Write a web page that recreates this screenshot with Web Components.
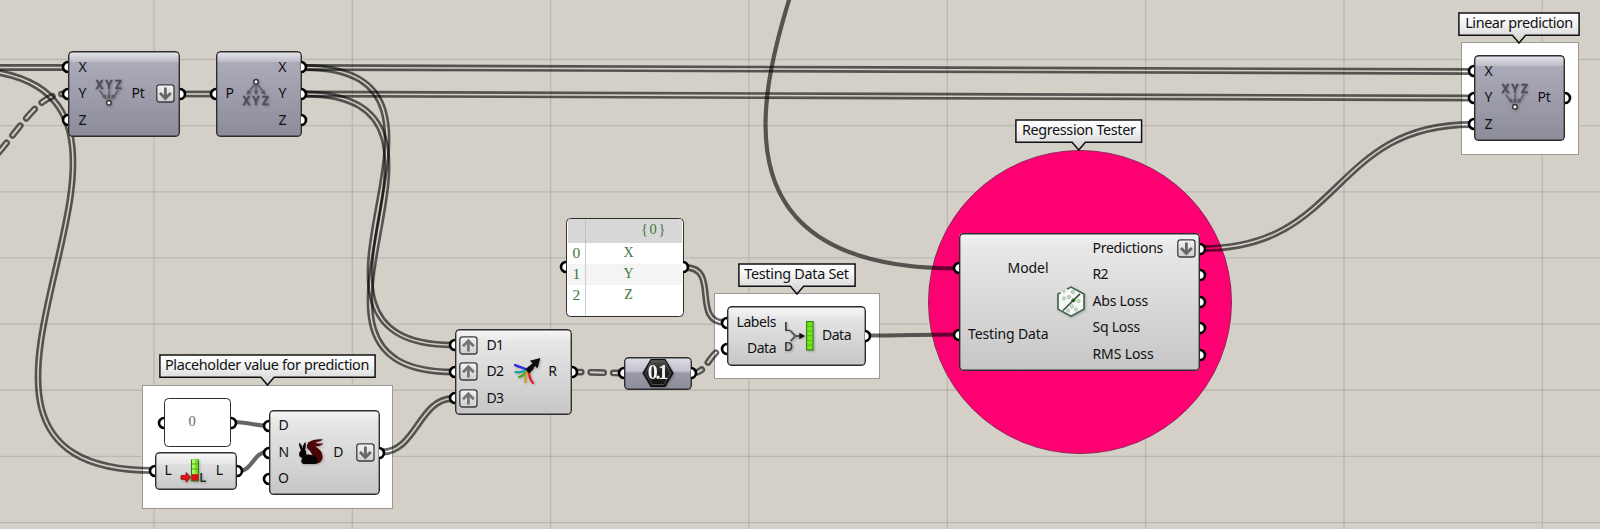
<!DOCTYPE html>
<html lang="en">
<head>
<meta charset="utf-8">
<title>Node canvas</title>
<style>
  html, body { margin: 0; padding: 0; overflow: hidden; }
  body { font-family: "Noto Sans", "Open Sans", sans-serif; font-size: 14px; color: #111; background: #d4d0c8; }
</style>
</head>
<body>
<gh-canvas>
  <gh-group style="left:142px;top:384.5px;width:248.5px;height:122.5px"></gh-group>
  <gh-group style="left:714px;top:293px;width:163.5px;height:84px"></gh-group>
  <gh-group style="left:1461px;top:42px;width:115.5px;height:110.5px"></gh-group>
  <gh-group round style="left:927.5px;top:149.5px"></gh-group>
  <gh-wires></gh-wires>

  <gh-node tone="dark" style="left:68px;top:51px;width:112px;height:85.5px">
    <gh-col style="width:28px"><gh-port side="in">X</gh-port><gh-port side="in">Y</gh-port><gh-port side="in">Z</gh-port></gh-col>
    <gh-icon name="compose"></gh-icon>
    <gh-col style="flex:1"><gh-port side="out" pad="5" gap="11.5" mode="down" fit="13">Pt</gh-port></gh-col>
  </gh-node>

  <gh-node tone="dark" style="left:216px;top:51px;width:85.5px;height:85.5px">
    <gh-col style="width:23px"><gh-port side="in" pad="9.5">P</gh-port></gh-col>
    <gh-icon name="decompose"></gh-icon>
    <gh-col style="flex:1"><gh-port side="out" pad="15">X</gh-port><gh-port side="out" pad="15">Y</gh-port><gh-port side="out" pad="15">Z</gh-port></gh-col>
  </gh-node>

  <gh-panel style="left:164px;top:398px;width:67px;height:49px" plain>0</gh-panel>

  <gh-node style="left:155px;top:452px;width:82px;height:38px">
    <gh-col style="width:22px"><gh-port side="in" pad="9.5">L</gh-port></gh-col>
    <gh-icon name="length"></gh-icon>
    <gh-col style="flex:1"><gh-port side="out" pad="14">L</gh-port></gh-col>
  </gh-node>

  <gh-node style="left:269px;top:410px;width:110.5px;height:85px">
    <gh-col style="width:28px"><gh-port side="in" pad="9.5">D</gh-port><gh-port side="in" pad="9.5">N</gh-port><gh-port side="in" pad="9">O</gh-port></gh-col>
    <gh-icon name="rabbit"></gh-icon>
    <gh-col style="flex:1"><gh-port side="out" pad="5" gap="12" mode="down">D</gh-port></gh-col>
  </gh-node>

  <gh-node style="left:455px;top:329px;width:117px;height:85.5px">
    <gh-col style="width:56px"><gh-port side="in" pad="3.5" gap="9" mode="up" fit="17">D1</gh-port><gh-port side="in" pad="3.5" gap="9" mode="up" fit="17">D2</gh-port><gh-port side="in" pad="3.5" gap="9" mode="up" fit="17">D3</gh-port></gh-col>
    <gh-icon name="weave"></gh-icon>
    <gh-col style="flex:1"><gh-port side="out" pad="15">R</gh-port></gh-col>
  </gh-node>

  <gh-panel style="left:566px;top:218px;width:117.5px;height:98.5px" path="{0}" rows="X,Y,Z"></gh-panel>

  <gh-node tone="dark" small style="left:624px;top:357px;width:67.5px;height:32.5px">
    <gh-col style="width:18px"><gh-port side="in"></gh-port></gh-col>
    <gh-icon name="number"></gh-icon>
    <gh-col style="flex:1"><gh-port side="out"></gh-port></gh-col>
  </gh-node>

  <gh-node style="left:727px;top:306px;width:138.5px;height:59.5px">
    <gh-col style="width:49px"><gh-port side="in" end fit="39.5">Labels</gh-port><gh-port side="in" end fit="29">Data</gh-port></gh-col>
    <gh-icon name="dataset"></gh-icon>
    <gh-col style="flex:1"><gh-port side="out" pad="14.5" fit="29">Data</gh-port></gh-col>
  </gh-node>

  <gh-node style="left:959px;top:232.5px;width:241px;height:138px">
    <gh-col tall style="width:89.5px"><gh-port side="in" end fit="41">Model</gh-port><gh-port side="in" end fit="80.5">Testing Data</gh-port></gh-col>
    <gh-icon name="regression"></gh-icon>
    <gh-col style="flex:1"><gh-port side="out" start mode="down" pad="4.5" fit="70.5">Predictions</gh-port><gh-port side="out" start fit="15.5">R2</gh-port><gh-port side="out" start fit="55.5">Abs Loss</gh-port><gh-port side="out" start fit="47.5">Sq Loss</gh-port><gh-port side="out" start fit="61">RMS Loss</gh-port></gh-col>
  </gh-node>

  <gh-node tone="dark" style="left:1474px;top:55px;width:91px;height:85.5px">
    <gh-col style="width:28px"><gh-port side="in">X</gh-port><gh-port side="in">Y</gh-port><gh-port side="in">Z</gh-port></gh-col>
    <gh-icon name="compose"></gh-icon>
    <gh-col style="flex:1"><gh-port side="out" pad="14.5" fit="13">Pt</gh-port></gh-col>
  </gh-node>

  <gh-label fit="204" style="left:158.5px;top:354px;width:217px">Placeholder value for prediction</gh-label>
  <gh-label fit="104.5" style="left:737.5px;top:262.5px;width:118px">Testing Data Set</gh-label>
  <gh-label fit="113.5" style="left:1015px;top:118.5px;width:127.5px">Regression Tester</gh-label>
  <gh-label fit="107.5" style="left:1458px;top:11.5px;width:122px">Linear prediction</gh-label>
</gh-canvas>

<script>
const mount = (el, html) => {
  if (!el.shadowRoot) el.attachShadow({ mode: 'open' });
  el.shadowRoot.innerHTML = html;
  return el.shadowRoot;
};

const fitText = (span, text, width) => {
  if (!width || text.length < 2) return;
  const natural = span.getBoundingClientRect().width;
  const step = (width - natural) / text.length;
  span.style.letterSpacing = step.toFixed(3) + 'px';
};

const half = side => side === 'in'
  ? '<svg class="knob" width="7" height="14" viewBox="0 0 7 14"><circle cx="7" cy="7" r="5" fill="#fff" stroke="#000" stroke-width="2.6"/></svg>'
  : '<svg class="knob" width="7" height="14" viewBox="0 0 7 14"><circle cx="0" cy="7" r="5" fill="#fff" stroke="#000" stroke-width="2.6"/></svg>';

customElements.define('gh-canvas', class extends HTMLElement {
  connectedCallback() {
    let lines = '';
    for (let i = 0; i < 8; i++) {
      const x = 154 + i * 198.33, y = 59.5 + i * 66.15;
      lines += `<path d="M${x} 0V529M0 ${y}H1600"/>`;
    }
    mount(this, `<style>
      :host { display: block; position: relative; width: 1600px; height: 529px; overflow: hidden; background: #d4d0c8; }
      svg { position: absolute; inset: 0; }
    </style><svg width="1600" height="529" stroke="#000" stroke-opacity=".115" stroke-width="1.3">${lines}</svg><slot></slot>`);
  }
});

customElements.define('gh-group', class extends HTMLElement {
  connectedCallback() {
    mount(this, `<style>
      :host { display: block; position: absolute; box-sizing: content-box; background: #fff; border: 1px solid #9b9893; }
      :host([round]) { background: #ff0073; border: 1px solid #8d2a55; border-radius: 50%; box-sizing: border-box; width: 304.5px; height: 304.5px; }
    </style>`);
  }
});

customElements.define('gh-wires', class extends HTMLElement {
  connectedCallback() {
    const link = (x1, y1, x2, y2, d) => `M${x1} ${y1}C${x1 + d} ${y1} ${x2 - d} ${y2} ${x2} ${y2}`;
    const wires = [
      ['double', 'M-20 67.5H64'],
      ['double', link(-43, 69, 154, 470.5, 291)],
      ['dash', 'M64 94C37 94 22 128 -14 167', 10],
      ['double', link(183, 94, 213, 94, 10)],
      ['double', link(304, 67.5, 1471, 71.5, 500)],
      ['double', link(304, 94, 1471, 98, 500)],
      ['double', link(304, 67.5, 453, 345, 200)],
      ['double', link(304, 94, 453, 372, 200)],
      ['double', link(382, 452, 453, 398.5, 34)],
      ['single', link(234, 422, 267, 425.5, 12)],
      ['single', link(239, 471, 267, 452, 13)],
      ['double', link(686, 267.5, 725, 322.5, 34)],
      ['dash', link(574, 372, 622, 373, 15), 5],
      ['dash', link(693, 373, 725, 349, 15), 3],
      ['single', link(868, 335.5, 958, 334.5, 30)],
      ['single', 'M793.5 -16L789 0C757 105 720 268.5 957 268.5'],
      ['double', link(1203, 248.5, 1471, 124.5, 140)]
    ];
    let defs = '', body = '';
    wires.forEach(([kind, d, off], i) => {
      if (kind === 'single') {
        body += `<path d="${d}" stroke-width="4.2"/>`;
        return;
      }
      const dash = kind === 'dash' ? ` stroke-dasharray="12.5 9.5" stroke-dashoffset="${off}" stroke-linecap="round"` : '';
      const outer = 6.8, inner = kind === 'dash' ? 2 : 1.6;
      defs += `<mask id="m${i}" maskUnits="userSpaceOnUse" x="-60" y="-60" width="1720" height="650">
        <rect x="-60" y="-60" width="1720" height="650" fill="#fff"/><path d="${d}" fill="none" stroke="#000" stroke-width="${inner}"${dash}/></mask>`;
      body += `<g mask="url(#m${i})"><path d="${d}" stroke-width="${outer}"${dash}/></g>`;
    });
    mount(this, `<style>:host { display: block; position: absolute; inset: 0; }</style>
      <svg width="1600" height="529"><defs>${defs}</defs><g fill="none" stroke="#000" stroke-opacity=".6">${body}</g></svg>`);
  }
});

customElements.define('gh-node', class extends HTMLElement {
  connectedCallback() {
    mount(this, `<style>
      :host { display: flex; position: absolute; align-items: stretch; border-radius: 4.5px; box-shadow: inset 0 0 0 1.4px #2e2e2e;
        background: linear-gradient(#f8f8f8, #e9e9e9 11px, rgba(233,233,233,0) 12px), linear-gradient(#ececec, #c6c6c6); }
      :host([tone=dark]) { background: linear-gradient(#eaeaee, #bcbbc7 11px, rgba(188,187,199,0) 11.5px), linear-gradient(#b0afbe, #8c8b99); }
      :host([tone=dark][small]) { background: linear-gradient(#dfdfe6, #c3c2cf 14px, rgba(188,187,199,0) 16px), linear-gradient(#a9a8b6, #8c8b99); }
    </style><slot></slot>`);
  }
});

customElements.define('gh-col', class extends HTMLElement {
  connectedCallback() {
    mount(this, `<style>
      :host { display: flex; flex-direction: column; justify-content: center; }
      :host([tall]) { --row: 66.2px; }
    </style><slot></slot>`);
  }
});

customElements.define('gh-port', class extends HTMLElement {
  connectedCallback() {
    const side = this.getAttribute('side'), text = this.textContent;
    const pad = this.getAttribute('pad') || 10.5, gap = this.getAttribute('gap') || 0, mode = this.getAttribute('mode');
    const arrow = mode ? `<svg class="mode" width="19" height="19" viewBox="0 0 19 19">
        <defs><linearGradient id="b" x2="0" y2="1"><stop stop-color="#f4f4f4"/><stop offset="1" stop-color="#cfcfcf"/></linearGradient></defs>
        <rect x=".8" y=".8" width="17.2" height="17.2" rx="2.6" fill="url(#b)" stroke="#3c3c3c" stroke-width="1.3"/>
        <path d="${mode === 'down' ? 'M9.4 3.6V14.4M4 9L9.4 14.4L14.8 9' : 'M9.4 15.6V4.8M4 10.2L9.4 4.8L14.8 10.2'}" fill="none" stroke="${mode === 'down' ? '#666' : '#757575'}" stroke-width="2.8"/></svg>` : '';
    const label = '<span><slot></slot></span>';
    const root = mount(this, `<style>
      :host { display: flex; position: relative; align-items: center; box-sizing: border-box; height: var(--row, 26.5px); white-space: nowrap;
        justify-content: ${side === 'out' ? 'flex-end' : 'flex-start'}; padding-${side === 'out' ? 'right' : 'left'}: ${pad}px; gap: ${gap}px; }
      :host([end]) { justify-content: flex-end; padding-left: 0; }
      :host([start]) { justify-content: space-between; padding-left: 6.5px; }
      span { line-height: 20px; padding-bottom: 1.5px; }
      svg { flex: none; display: block; }
      .knob { position: absolute; top: calc(50% - 7px); ${side === 'in' ? 'left: -6.6px' : 'right: -6.6px'}; }
    </style>${half(side)}${side === 'in' ? arrow + label : label + arrow}`);
    fitText(root.querySelector('span'), text, +this.getAttribute('fit'));
  }
});

customElements.define('gh-panel', class extends HTMLElement {
  connectedCallback() {
    const rows = (this.getAttribute('rows') || '').split(',').filter(Boolean);
    const inner = this.hasAttribute('plain')
      ? '<div class="plain"><slot></slot></div>'
      : `<div class="head"><i></i><b>${this.getAttribute('path')}</b></div>` +
        rows.map((r, i) => `<div class="row"><i>${i}</i><b>${r}</b></div>`).join('') + '<div class="rest"><i></i></div>';
    mount(this, `<style>
      :host { display: block; position: absolute; font: 15px "Liberation Serif", serif; color: #3f7343; }
      .box { display: flex; flex-direction: column; box-sizing: border-box; height: 100%; border: 1.5px solid #2e2e2e; border-radius: 4.5px; background: #fff; overflow: hidden; padding: 0 1px; }
      .plain { flex: 1; display: flex; align-items: center; justify-content: center; padding: 0 11px 2px 0; color: #666; font-size: 14.5px; }
      .head, .row, .rest { display: flex; }
      .head { height: 24px; background: #d7d7d7; line-height: 20px; }
      .row { height: 21.2px; line-height: 20px; }
      .row:nth-child(odd) { background: #f4f4f4; }
      .rest { flex: 1; }
      i { width: 16.5px; border-right: 1px solid #ccd3cc; font-style: normal; text-align: center; font-size: 15.5px; }
      .head i { border-color: #bdc2bd; }
      b { font-weight: normal; flex: 1; text-align: center; padding-right: 10px; font-size: 14px; }
      .head b { text-align: right; padding-right: 14.5px; letter-spacing: 1.6px; font-size: 14.5px; }
      .knob { position: absolute; top: calc(50% - 7px); }
      .in { left: -6.6px; } .out { right: -6.6px; }
      .in, .out { position: absolute; top: 0; height: 100%; width: 7px; }
    </style><div class="box">${inner}</div><div class="in">${half('in')}</div><div class="out">${half('out')}</div>`);
  }
});

customElements.define('gh-label', class extends HTMLElement {
  connectedCallback() {
    const text = this.textContent, w = parseFloat(this.style.width), m = w / 2;
    const root = mount(this, `<style>
      :host { display: flex; position: absolute; height: 24px; align-items: center; justify-content: center; font-size: 14.4px; white-space: nowrap; }
      svg { position: absolute; left: 0; top: 0; overflow: visible; }
      span { position: relative; line-height: 22px; padding-bottom: 1.5px; }
    </style><svg width="${w}" height="32"><defs><linearGradient id="g" x2="0" y2="1"><stop stop-color="#fff"/><stop offset=".3" stop-color="#f6f6f6"/><stop offset="1" stop-color="#cfcfcf"/></linearGradient></defs>
      <path d="M.9 .9H${w - .9}V23.2H${m + 6.6}L${m} 31L${m - 6.6} 23.2H.9Z" fill="url(#g)" stroke="#111" stroke-width="1.5"/></svg><span><slot></slot></span>`);
    fitText(root.querySelector('span'), text, +this.getAttribute('fit'));
  }
});

const letters = y => `<g font-family="Noto Sans" font-weight="700" font-size="11.8" fill="#4e4d57" stroke="#4e4d57" stroke-width=".3" text-anchor="middle"><text x="4.4" y="${y}">X</text><text x="14" y="${y}">Y</text><text x="23.4" y="${y}">Z</text></g>`;
const ICONS = {
  compose: [28, 32, letters(12.5) + '<g stroke="#605f6a" stroke-width="1.6" fill="none"><path d="M4.5 14L10.5 21.5M14 14V22M23 14L17.5 21.5"/></g><path d="M12 23L7.3 20.6L10.7 17.8ZM14 23L11.8 18.7H16.2ZM16 23L20.7 20.6L17.3 17.8Z" fill="#5a5964"/><circle cx="13.9" cy="26.3" r="2.3" fill="#f4f4f4" stroke="#333" stroke-width="1.4"/>'],
  decompose: [28, 30, letters(27.4) + '<g stroke="#605f6a" stroke-width="1.6"><path d="M12.5 7L7 14M14 7V14M15.5 7L21 14"/></g><path d="M4.5 17.5L5.7 12.3L9.5 15.3ZM14 17.5L11.6 13.2H16.4ZM23.5 17.5L22.3 12.3L18.5 15.3Z" fill="#5a5964"/><circle cx="14" cy="4.3" r="2.3" fill="#f4f4f4" stroke="#333" stroke-width="1.4"/>'],
  length: [30, 26, '<path d="M12 1H20V23H12Z" fill="#2f7d12"/><path d="M13 1H19V17H13Z" fill="#74e01c"/><path d="M13 1H16V17H13Z" fill="#a8f46a"/><path d="M13 5.5H19M13 10.5H19" stroke="#4da512"/><rect x="12.7" y="15.7" width="6.6" height="6.3" fill="#d41212"/><path d="M2 17H7V14L12 18.9L7 23.8V20.8H2Z" fill="#e01515" stroke="#8e0b0b" stroke-width=".8"/><text x="20.2" y="23.5" font-family="Noto Sans" font-weight="600" font-size="13" fill="#333">L</text>'],
  rabbit: [28, 28, '<path d="M26 1.5C21 1 15 1.5 11.5 4.5C8.5 8 10 11.5 13.5 13C17.5 15 18 18 17 22L16 25.5C21 26.5 26 23.5 25.5 18.5C25 13.5 20 11.5 17.5 8.3C21 8.5 24 8 26.5 5.5L21 5.6L18 4.8C21 3.4 24 3 26 1.5Z" fill="#4c0505"/><path d="M11 4.5C15 3 18 5 18.5 8.5C22 11 25.5 13.5 25.3 18L17 20L12 11Z" fill="#4c0505"/><path d="M2 4.5C4 6 5.2 8 5.8 10.5C5.8 8 6.4 5.6 8.5 4C9 7 8.8 9.5 8 12C9.5 13.4 9.2 15 9 16.5C12 16 18 17 20 20C22 23 20.5 25.8 17 26H7C4 25.8 3.6 22.5 5.3 20C2.6 19.5 1.5 17.5 2.3 14.5L4 12C2.8 9.5 1.8 7.5 2 4.5Z" fill="#050505"/>'],
  weave: [30, 30, '<g fill="none" stroke-width="2.2" stroke-linecap="round"><path d="M3 9C7 11.5 11 11 15 14" stroke="#2a2ae0"/><path d="M3.5 16C8 17 11 14.5 15 15" stroke="#1aa5a0"/><path d="M7 21C11 20.5 12 18 15 15.5" stroke="#45a52c"/><path d="M13 26C13.5 22 13 19 15.5 15.5" stroke="#d39b22"/><path d="M21 27C16.5 23 18 19 16.5 15.5" stroke="#e01c22"/></g><path d="M13.5 13L20.5 7.2L17.8 4.8L28.3 2L25.5 12.6L23.2 10L17 17Z" fill="#0b0b0b"/><path d="M16 16L20.5 11" stroke="#080808" stroke-width="4"/>'],
  number: [32, 30, '<defs><linearGradient id="h" x2="0" y2="1"><stop stop-color="#555"/><stop offset=".45" stop-color="#222"/><stop offset="1" stop-color="#111"/></linearGradient></defs><path d="M9 1.5H23L31 15L23 28.5H9L1 15Z" fill="url(#h)" stroke="#111" stroke-width="1.2"/><path d="M10 3.5H22L28.6 15L22 26.5H10L3.4 15Z" fill="none" stroke="#5a5a5a" stroke-width=".8"/><text x="16" y="21.4" text-anchor="middle" font-family="Liberation Serif" font-weight="700" font-size="20" textLength="20.5" lengthAdjust="spacing" fill="#f4f4f4">0.1</text>'],
  dataset: [30, 32, '<g font-family="Noto Sans" font-weight="600" font-size="12.5" fill="#3a3a3a"><text x="0" y="11">L</text><text x="0" y="31">D</text></g><path d="M6.5 10.8L11.5 16L6.5 21.2M11.5 16H16" fill="none" stroke="#555" stroke-width="1.9"/><path d="M15.3 12.8L21.2 16L15.3 19.2Z" fill="#111"/><rect x="22.6" y="1.6" width="6.4" height="28.4" fill="#74e81a" stroke="#358a14" stroke-width="1.2"/><path d="M23 6.3H29M23 11H29M23 15.7H29M23 20.4H29M23 25.1H29" stroke="#52b415"/>'],
  regression: [30, 32, '<path d="M15 1.6L28 8.6V23.6L15 30.6L2 23.6V8.6Z" fill="#f5f8f5"/><path d="M11 3.6L15 1.6L28 8.6V23.6L15 30.6L2 23.6V8.6L4.5 7.3" fill="none" stroke="#3f5f43" stroke-width="1.6"/><g fill="#d3ddd3" stroke="#a9bcaa" stroke-width="1"><circle cx="8" cy="13" r="1.6"/><circle cx="13" cy="11.5" r="1.6"/><circle cx="17" cy="6.5" r="1.6"/><circle cx="22.5" cy="15.5" r="1.6"/><circle cx="16" cy="21" r="1.6"/><circle cx="20" cy="24" r="1.6"/><circle cx="12" cy="25" r="1.6"/><circle cx="8" cy="6" r="1"/></g><path d="M7 25L24 8.3" stroke="#35563a" stroke-width="1.7"/><circle cx="17.3" cy="14.8" r="1.9" fill="#28601c"/>']
};
const PLACE = { compose: '-1px -1.5px', decompose: '2.5px -1.5px', length: '2px .5px', rabbit: '-.5px -1px', weave: '.5px -1px', number: '-.5px 0', dataset: '7.5px 0', regression: '7.5px -.5px' };

customElements.define('gh-icon', class extends HTMLElement {
  connectedCallback() {
    const name = this.getAttribute('name'), [w, h, art] = ICONS[name], [x, y] = PLACE[name].split(' ');
    mount(this, `<style>
      :host { display: flex; flex: none; align-items: center; margin-left: ${x}; }
      svg { display: block; overflow: visible; translate: 0 ${y}; filter: drop-shadow(1px 1px 1px rgba(0,0,0,.25)); }
    </style><svg width="${w}" height="${h}" viewBox="0 0 ${w} ${h}">${art}</svg>`);
  }
});
</script>
</body>
</html>
